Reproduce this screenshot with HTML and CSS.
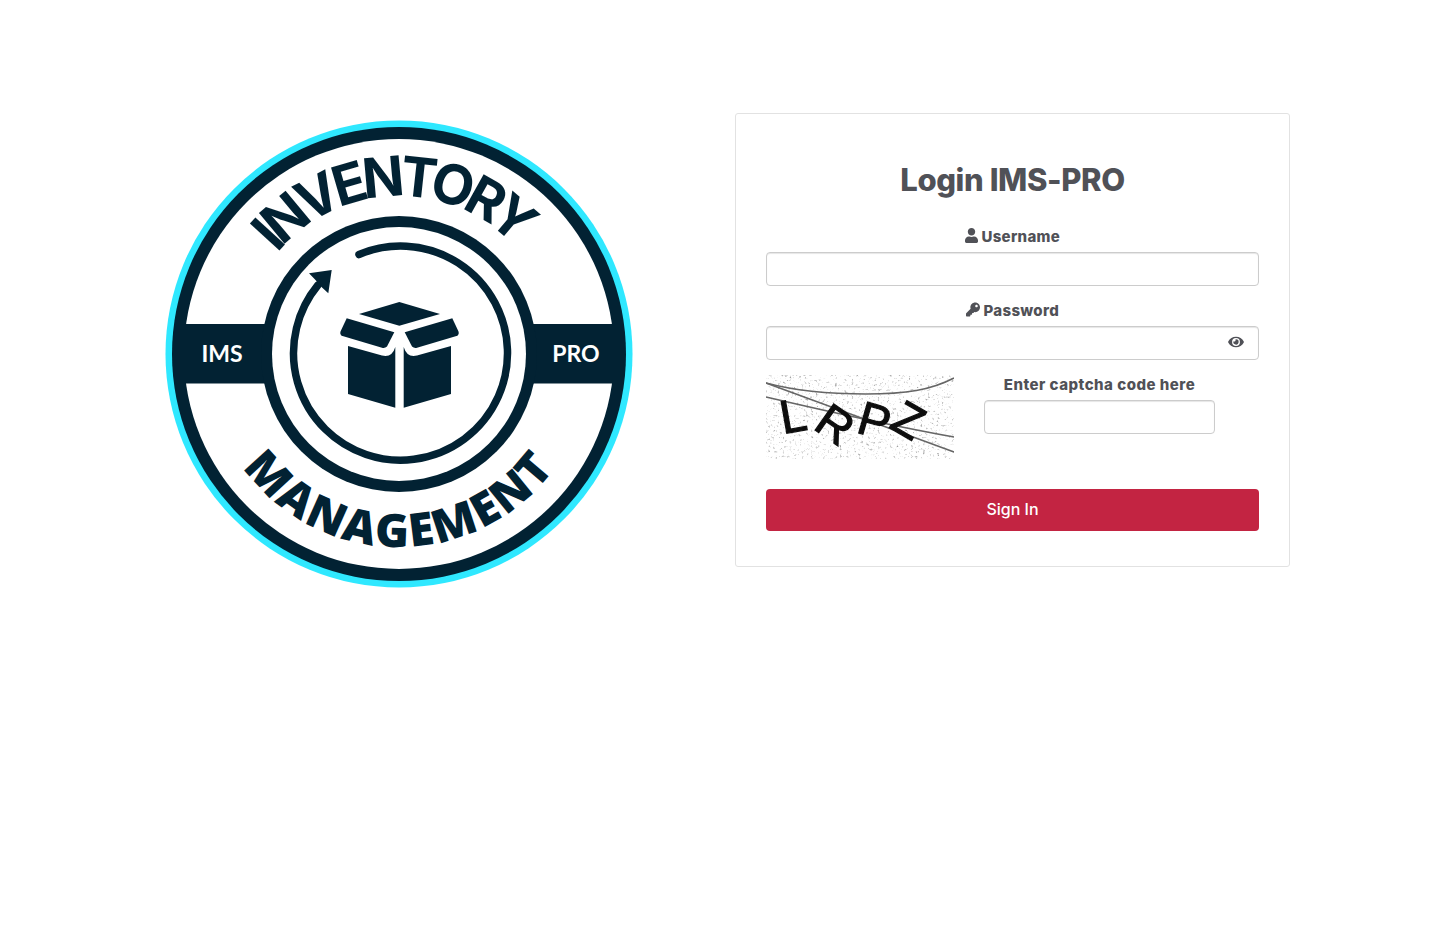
FILE: index.html
```html
<!DOCTYPE html>
<html lang="en">
<head>
    <meta charset="UTF-8">
    <meta name="viewport" content="width=device-width, initial-scale=1.0">
    <title>Login IMS-PRO</title>
    <link rel="stylesheet" href="styles.css">
</head>
<body>
    <div class="container">
        <div class="logo-col">
            <!-- viewBox uses page coordinates, centre of badge is 399,354 -->
            <svg class="logo" viewBox="165 120 468 468" role="img" aria-label="Inventory Management IMS PRO">
                <defs>
                    <path id="arc-top" d="M 241 354 A 158 158 0 0 1 557 354"/>
                    <path id="arc-bottom" d="M 206 354 A 193 193 0 0 0 592 354"/>
                </defs>
                <circle cx="399" cy="354" r="233.5" fill="#2fe8ff"/>
                <circle cx="399" cy="354" r="227" fill="#022233"/>
                <circle cx="399" cy="354" r="215" fill="#fff"/>
                <rect x="180" y="324" width="438" height="59.5" fill="#022233"/>
                <circle cx="399" cy="354" r="138" fill="#022233"/>
                <circle cx="399" cy="354" r="127" fill="#fff"/>

                <text class="logo-top"><textPath href="#arc-top" startOffset="109" textLength="270" lengthAdjust="spacing">INVENTORY</textPath></text>
                <text class="logo-bottom"><textPath href="#arc-bottom" startOffset="121" textLength="362" lengthAdjust="spacing">MANAGEMENT</textPath></text>
                <text class="logo-side" x="222" y="362" text-anchor="middle">IMS</text>
                <text class="logo-side" x="576" y="362" text-anchor="middle">PRO</text>

                <!-- circular arrow -->
                <path d="M 359 254.5 A 107 107 0 1 1 318 285" fill="none" stroke="#022233" stroke-width="7.5" stroke-linecap="round"/>
                <path d="M331.7 270 L309 273.3 L315.5 280 L321.5 287 L328.3 293.3 Z" fill="#022233"/>

                <!-- box -->
                <g fill="#022233">
                    <path d="M399.3 302 L440 314 L399.3 325.7 L359 314 Z"/>
                    <path d="M346.7 318.3 L394.3 332.3 L387 346.5 Q385 348.5 382 347.8 L342.5 336 Q339.5 334.5 340.5 331.5 Z"/>
                    <path d="M452.3 318.3 L404.7 332.3 L412 346.5 Q414 348.5 417 347.8 L456.5 336 Q459.5 334.5 458.5 331.5 Z"/>
                    <path d="M348 346 L382 355.5 Q392 358 395.3 347 L395.3 407.7 L348 394 Z"/>
                    <path d="M451 346 L417 355.5 Q407 358 403.7 347 L403.7 407.7 L451 394 Z"/>
                </g>
            </svg>
        </div>

        <div class="form-col">
            <form class="login-card">
                <h1>Login IMS-PRO</h1>

                <div class="form-group">
                    <label for="username">
                        <svg class="icon" viewBox="0 0 448 512"><path d="M224 256c70.7 0 128-57.3 128-128S294.7 0 224 0 96 57.3 96 128s57.3 128 128 128zm89.6 32h-16.7c-22.2 10.2-46.9 16-72.9 16s-50.6-5.8-72.9-16h-16.7C60.2 288 0 348.2 0 422.4V464c0 26.5 21.5 48 48 48h352c26.5 0 48-21.5 48-48v-41.6c0-74.2-60.2-134.4-134.4-134.4z"/></svg>
                        Username
                    </label>
                    <input id="username" type="text" class="form-control">
                </div>

                <div class="form-group">
                    <label for="password">
                        <svg class="icon icon-key" viewBox="0 0 512 512"><path d="M512 176.001C512 273.203 433.202 352 336 352c-11.22 0-22.19-1.062-32.827-3.069l-24.012 27.014A23.999 23.999 0 0 1 261.223 384H224v40c0 13.255-10.745 24-24 24h-40v40c0 13.255-10.745 24-24 24H24c-13.255 0-24-10.745-24-24v-78.059c0-6.365 2.529-12.47 7.029-16.971l161.802-161.802C163.108 213.814 160 195.271 160 176 160 78.798 238.797.001 335.999 0 433.488-.001 512 78.511 512 176.001zM336 128c0 26.51 21.49 48 48 48s48-21.49 48-48-21.49-48-48-48-48 21.49-48 48z"/></svg>
                        Password
                    </label>
                    <div class="password-wrap">
                        <input id="password" type="password" class="form-control">
                        <svg class="eye" viewBox="0 0 576 512"><path d="M572.52 241.4C518.29 135.59 410.93 64 288 64S57.68 135.64 3.48 241.41a32.35 32.35 0 0 0 0 29.19C57.71 376.41 165.07 448 288 448s230.32-71.64 284.52-177.41a32.35 32.35 0 0 0 0-29.19zM288 400a144 144 0 1 1 144-144 143.93 143.93 0 0 1-144 144zm0-240a95.31 95.31 0 0 0-25.31 3.79 47.85 47.85 0 0 1-66.9 66.9A95.78 95.78 0 1 0 288 160z"/></svg>
                    </div>
                </div>

                <div class="captcha-row">
                    <svg class="captcha" viewBox="0 0 188 84" role="img" aria-label="captcha">
                        <defs>
                            <filter id="speckle" x="0" y="0" width="100%" height="100%">
                                <feTurbulence type="fractalNoise" baseFrequency="0.42" numOctaves="2" seed="7"/>
                                <feColorMatrix type="matrix" values="0 0 0 0 0.35  0 0 0 0 0.35  0 0 0 0 0.35  2.2 2.2 0 0 -2.45"/>
                                <feGaussianBlur stdDeviation="0.5"/>
                            </filter>
                            <filter id="soft"><feGaussianBlur stdDeviation="0.55"/></filter>
                        </defs>
                        <rect width="188" height="84" fill="#fff"/>
                        <rect width="188" height="84" filter="url(#speckle)"/>
                        <g fill="none" stroke="#666" stroke-width="1.6" filter="url(#soft)">
                            <path d="M0 8 C 30 16, 60 19, 100 19 S 165 15, 188 3"/>
                            <path d="M0 8 L 188 77"/>
                            <path d="M0 22 C 60 36, 120 50, 188 62"/>
                        </g>
                        <text class="captcha-text" x="17 46 89 122" y="59 53 57 52" rotate="-10 35 16 30" filter="url(#soft)">LRPZ</text>
                    </svg>
                    <div class="captcha-input">
                        <label for="captcha">Enter captcha code here</label>
                        <input id="captcha" type="text" class="form-control">
                    </div>
                </div>

                <button type="button" class="btn-signin">Sign In</button>
            </form>
        </div>
    </div>
</body>
</html>
```

FILE: styles.css
```css
body {
    font-family: 'Inter', 'Liberation Sans', sans-serif;
    color: #505157;
    background-color: #fff;
    margin: 0;
}

.container {
    display: grid;
    grid-template-columns: 1fr 1fr;
    width: 1170px;
    margin: 0 auto;
    padding-top: 113px;
}

.logo-col {
    padding: 7px 15px 0 30px;
}

.logo {
    display: block;
    width: 468px;
    height: 468px;
}

.logo-top,
.logo-bottom {
    fill: #022233;
}

.logo-top {
    font-family: 'Inter', sans-serif;
    font-size: 55px;
    font-weight: 700;
}

.logo-bottom {
    font-family: 'Open Sans', sans-serif;
    font-size: 46px;
    font-weight: 800;
}

.logo-side {
    font-family: 'Lato', sans-serif;
    font-size: 23px;
    font-weight: 700;
    fill: #fff;
}

.form-col {
    padding: 0 15px;
}

.login-card {
    border: 1px solid #e2e2e2;
    border-radius: 3px;
    padding: 42px 30px 35px;
}

h1 {
    font-size: 31px;
    line-height: 48px;
    font-weight: 800;
    letter-spacing: -0.4px;
    text-align: center;
    margin: 0 0 21px;
}

.form-group {
    margin-bottom: 13px;
}

label {
    display: block;
    font-size: 15px;
    line-height: 24px;
    font-weight: 800;
    text-align: center;
    letter-spacing: 0.3px;
    margin-bottom: 3px;
}

.icon {
    width: 13px;
    height: 15px;
    fill: currentColor;
    vertical-align: -1px;
}

.icon-key {
    width: 14px;
}

.form-control {
    display: block;
    box-sizing: border-box;
    width: 100%;
    height: 34px;
    border: 1px solid #ccc;
    border-radius: 4px;
    background-color: #fff;
    box-shadow: inset 0 1px 1px rgba(0, 0, 0, 0.1);
}

.password-wrap {
    position: relative;
}

.eye {
    position: absolute;
    top: 9px;
    right: 15px;
    width: 16px;
    height: 14px;
    fill: currentColor;
}

.captcha-row {
    display: flex;
    align-items: flex-start;
    gap: 30px;
    margin-bottom: 30px;
}

.captcha {
    display: block;
    width: 188px;
    height: 84px;
    margin-top: 2px;
}

.captcha-text {
    font-family: 'Liberation Sans', sans-serif;
    font-size: 47px;
    fill: #111;
    stroke: #111;
    stroke-width: 1.2px;
}

.captcha-input {
    width: 231px;
}

.captcha-input label {
    white-space: nowrap;
    letter-spacing: 0.5px;
}

.btn-signin {
    display: block;
    width: 100%;
    height: 42px;
    padding-bottom: 3px;
    border: none;
    border-radius: 4px;
    background-color: #c32442;
    color: #fff;
    font-family: inherit;
    font-size: 16px;
    font-weight: 500;
    cursor: pointer;
}
```
